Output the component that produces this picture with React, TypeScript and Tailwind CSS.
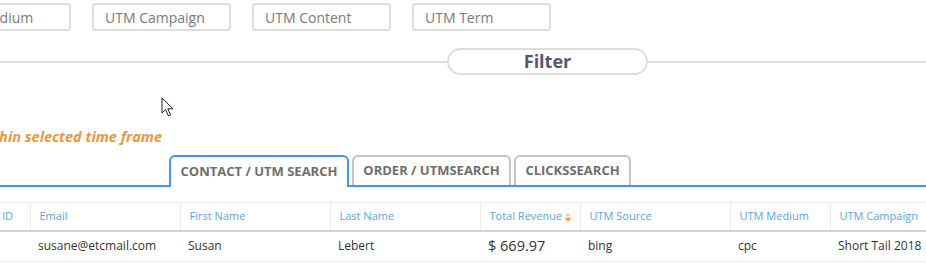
import React from 'react';

const inputs = ['UTM Medium', 'UTM Campaign', 'UTM Content', 'UTM Term'];

const columns = [
  { label: 'ID', w: 'w-[37px]' },
  { label: 'Email', w: 'w-[150px]' },
  { label: 'First Name', w: 'w-[150px]' },
  { label: 'Last Name', w: 'w-[150px]' },
  { label: 'Total Revenue', w: 'w-[100px]', sort: true },
  { label: 'UTM Source', w: 'w-[150px]' },
  { label: 'UTM Medium', w: 'w-[100px]' },
  { label: 'UTM Campaign', w: 'w-[150px]' },
];

const row = ['', 'susane@etcmail.com', 'Susan', 'Lebert', '$ 669.97', 'bing', 'cpc', 'Short Tail 2018'];

function SortIcon() {
  return (
    <svg width="8" height="11" viewBox="0 0 8 11" className="absolute right-[8px] top-[9px]">
      <path d="M4 0.5 L7.5 4.5 L0.5 4.5 Z" fill="#f7cda6" />
      <path d="M0.5 6 L7.5 6 L4 10 Z" fill="#f29a4a" />
    </svg>
  );
}

function Cursor() {
  return (
    <svg width="14" height="21" viewBox="0 0 14 21" className="absolute left-[161px] top-[97px]">
      <path
        d="M1 1 L1 16 L4.6 12.6 L7.4 19 L9.6 18 L6.9 11.8 L12 11.8 Z"
        fill="#fff"
        stroke="#222"
        strokeWidth="1"
        strokeLinejoin="round"
      />
    </svg>
  );
}

export default function App() {
  return (
    <div className="relative w-[926px] h-[267px] overflow-hidden bg-white font-['Open_Sans',sans-serif]">
      {/* utm inputs */}
      <div className="flex gap-[21px] pt-[3px] ml-[-68px]">
        {inputs.map((p) => (
          <input
            key={p}
            readOnly
            placeholder={p}
            className="w-[139px] h-[28px] shrink-0 border-2 border-[#dedede] rounded-[4px] px-[11px] text-[14px] text-[#777] placeholder:text-[#7a7a7a] outline-none"
          />
        ))}
      </div>

      {/* filter divider */}
      <div className="flex items-center mt-[17px]">
        <div className="w-[447px] h-[2px] bg-[#dddddd]" />
        <button className="w-[201px] h-[27px] border-2 border-[#dddddd] rounded-full flex items-center justify-center pb-[2px] text-[18px] font-bold text-[#525870] leading-none">
          Filter
        </button>
        <div className="flex-1 h-[2px] bg-[#dddddd]" />
      </div>

      {/* notice */}
      <div className="flex justify-end w-[162px] mt-[52px]">
        <span className="whitespace-nowrap text-[14.5px] font-bold italic text-[#f0953c] leading-[20px]">
          No data within selected time frame
        </span>
      </div>

      {/* tabs */}
      <div className="flex items-end pl-[169px] mt-[8px] border-b-2 border-[#3d9de3] gap-[3px]">
        <div className="w-[180px] h-[32px] -mb-[2px] bg-white border-2 border-b-0 border-[#3d9de3] rounded-t-[6px] flex items-center justify-center pb-[1px] text-[13px] font-bold text-[#6e6e6e]">
          CONTACT / UTM SEARCH
        </div>
        <div className="w-[159px] h-[30px] border-2 border-b-0 border-[#c2c6cb] rounded-t-[6px] flex items-center justify-center text-[13px] font-bold text-[#6e6e6e]">
          ORDER / UTMSEARCH
        </div>
        <div className="w-[117px] h-[30px] border-2 border-b-0 border-[#c2c6cb] rounded-t-[6px] flex items-center justify-center text-[13px] font-bold text-[#6e6e6e]">
          CLICKSSEARCH
        </div>
      </div>

      {/* table */}
      <table className="mt-[15px] ml-[-7px] border-collapse table-fixed w-[987px]">
        <thead>
          <tr className="h-[28px] border-t border-[#ececec] border-b-2 border-b-[#d2d2d2]">
            {columns.map((c) => (
              <th
                key={c.label}
                className={`${c.w} relative text-left font-normal text-[11px] text-[#58a6e6] pl-[9px] border-l border-[#ececec] first:border-l-0`}
              >
                {c.label}
                {c.sort && <SortIcon />}
              </th>
            ))}
          </tr>
        </thead>
        <tbody>
          <tr className="h-[31px] border-b border-[#ececec]">
            {row.map((v, i) => (
              <td
                key={i}
                className={`pl-[8px] text-[#333] whitespace-nowrap ${i === 4 ? 'text-[14.5px]' : 'text-[12px]'}`}
              >
                {v}
              </td>
            ))}
          </tr>
        </tbody>
      </table>

      <Cursor />
    </div>
  );
}
